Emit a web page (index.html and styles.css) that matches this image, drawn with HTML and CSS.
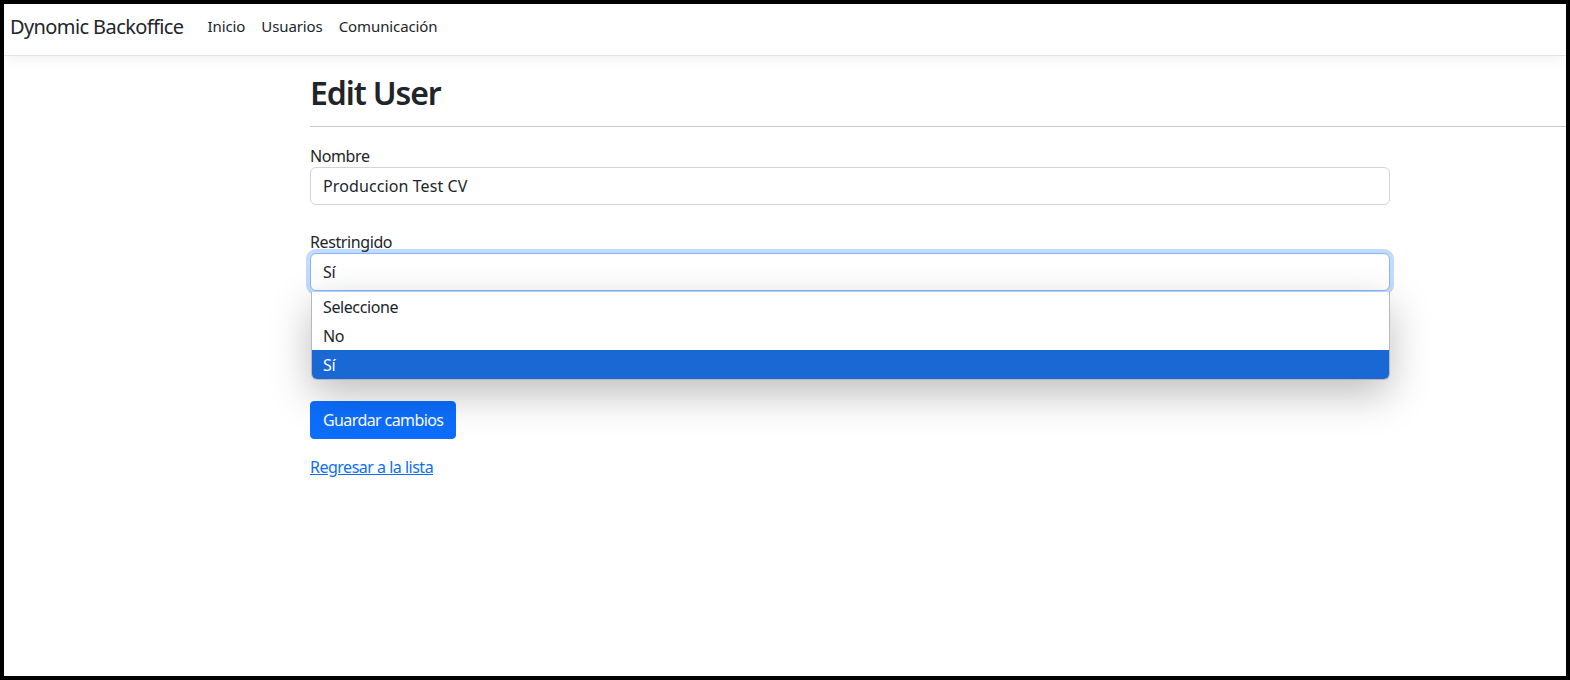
FILE: index.html
```html
<!DOCTYPE html>
<html lang="es">
<head>
<meta charset="utf-8">
<title>Edit User - Dynomic Backoffice</title>
<link rel="stylesheet" href="styles.css">
</head>
<body>
<header class="navbar">
  <a class="brand" href="#">Dynomic Backoffice</a>
  <nav class="nav">
    <a class="nav-link" href="#">Inicio</a>
    <a class="nav-link" href="#">Usuarios</a>
    <a class="nav-link" href="#">Comunicación</a>
  </nav>
</header>
<main class="main">
  <h2 class="title">Edit User</h2>
  <hr class="rule">
  <form class="form">
    <div class="group">
      <label class="label">Nombre</label>
      <div class="control control-text">Produccion Test CV</div>
    </div>
    <div class="group group-select">
      <label class="label">Restringido</label>
      <div class="control control-focus">Sí</div>
      <ul class="dropdown">
        <li class="option">Seleccione</li>
        <li class="option">No</li>
        <li class="option option-active">Sí</li>
      </ul>
    </div>
    <div class="actions">
      <button type="button" class="btn">Guardar cambios</button>
    </div>
  </form>
  <div class="back">
    <a href="#" class="link">Regresar a la lista</a>
  </div>
</main>
</body>
</html>
```
FILE: styles.css
```css
html {
  background: #000;
}
body {
  margin: 4px;
  height: 672px;
  background: #fff;
  overflow: hidden;
  font-family: "Noto Sans", "Open Sans", sans-serif;
  font-size: 16px;
  line-height: 1.5;
  color: #212529;
  letter-spacing: -0.4px;
}
.navbar {
  display: flex;
  align-items: center;
  height: 51px;
  padding-left: 6px;
  border-bottom: 1px solid #e2e3e5;
  box-shadow: 0 4px 12px rgba(0, 0, 0, 0.05);
  background: #fff;
}
.brand {
  font-size: 20px;
  letter-spacing: -0.6px;
  color: #212529;
  text-decoration: none;
  margin-right: 16px;
  padding-bottom: 6px;
}
.nav {
  display: flex;
  padding-bottom: 6px;
}
.nav-link {
  color: #212529;
  text-decoration: none;
  font-size: 15px;
  letter-spacing: -0.1px;
  padding: 0 8px;
}
.main {
  padding-left: 306px;
  padding-top: 16px;
}
.title {
  margin: 0;
  padding-top: 2px;
  font-size: 32px;
  font-weight: 600;
  letter-spacing: -1.1px;
  line-height: 1.2;
}
.rule {
  margin: 14px 0 16px;
  border: 0;
  border-top: 1px solid #c8c9ca;
}
.form {
  width: 1080px;
}
.group {
  margin-bottom: 24px;
}
.label {
  display: block;
  box-sizing: border-box;
  padding-top: 1px;
  height: 24px;
}
.control {
  height: 38px;
  box-sizing: border-box;
  padding: 6px 12px;
  border: 1px solid #ced4da;
  border-radius: 6px;
  background: #fff;
}
.control-text {
  letter-spacing: 0.1px;
}
.control-focus {
  border-color: #86b7fe;
  box-shadow: 0 0 0 4px rgba(13, 110, 253, 0.25);
}
.group-select {
  position: relative;
  margin-bottom: 110px;
}
.dropdown {
  position: absolute;
  left: 1px;
  right: 0;
  top: 63px;
  margin: 0;
  padding: 0;
  list-style: none;
  background: #fff;
  border: 1px solid #b8b8b8;
  border-top: 0;
  border-radius: 0 0 6px 6px;
  overflow: hidden;
  box-shadow: 0 14px 40px rgba(0, 0, 0, 0.26);
}
.option {
  height: 29px;
  box-sizing: border-box;
  padding: 3px 0 0 11px;
  line-height: 24px;
}
.option-active {
  background: #1a68d4;
  color: #fff;
}
.actions {
  margin-bottom: 16px;
}
.btn {
  font-family: inherit;
  font-size: 16px;
  letter-spacing: -0.6px;
  line-height: 1.5;
  color: #fff;
  background: #0d6efd;
  border: 1px solid #0d6efd;
  border-radius: 4px;
  padding: 6px 12px;
  cursor: pointer;
}
.link {
  color: #0d6efd;
  letter-spacing: -0.5px;
  text-decoration: underline;
}
```
